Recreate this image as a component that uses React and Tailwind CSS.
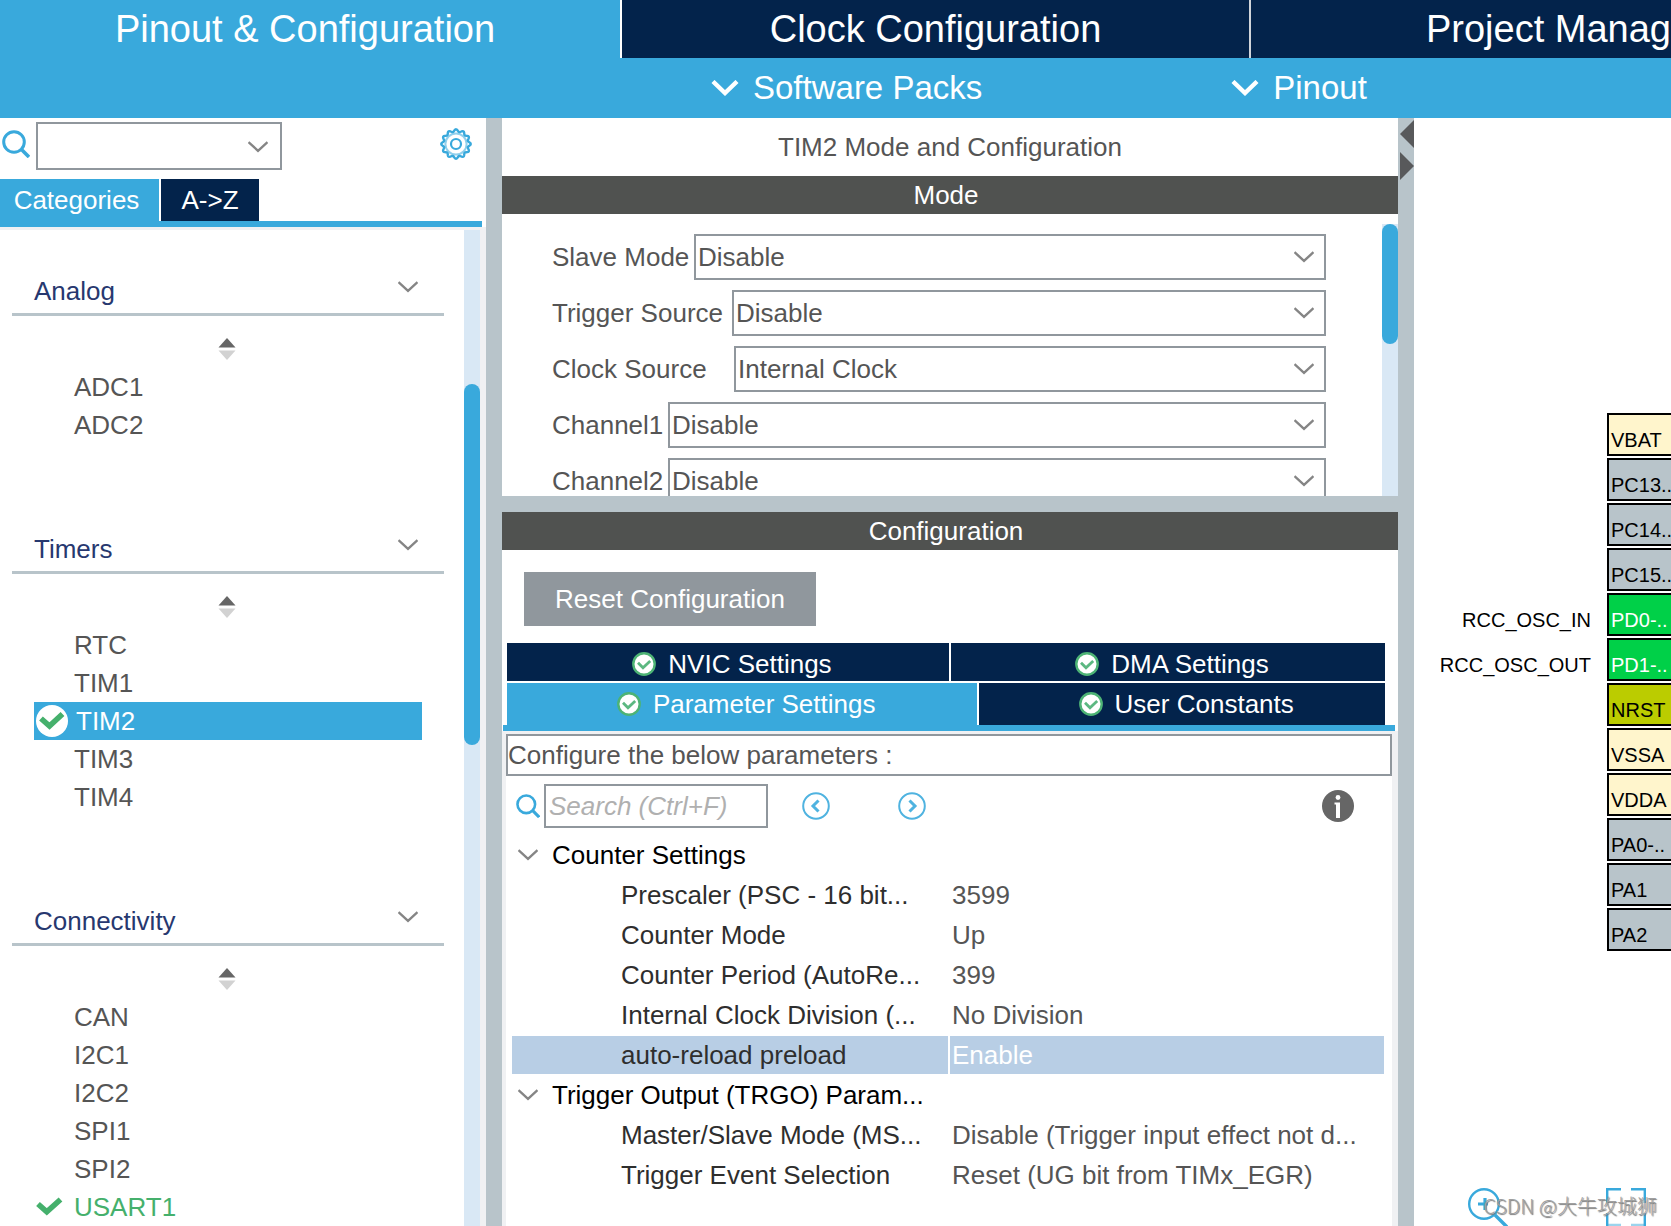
import React, { useState } from "react";
import clsx from "clsx";

const CATEGORIES = [
  { name: "Analog", items: [{ name: "ADC1" }, { name: "ADC2" }] },
  {
    name: "Timers",
    items: [
      { name: "RTC" },
      { name: "TIM1" },
      { name: "TIM2", enabled: true },
      { name: "TIM3" },
      { name: "TIM4" },
    ],
  },
  {
    name: "Connectivity",
    items: [
      { name: "CAN" },
      { name: "I2C1" },
      { name: "I2C2" },
      { name: "SPI1" },
      { name: "SPI2" },
      { name: "USART1", enabled: true },
    ],
  },
];

const MODE_FIELDS = [
  { id: "slave-mode", label: "Slave Mode", value: "Disable", labelWidth: "w-[142px]" },
  { id: "trigger-source", label: "Trigger Source", value: "Disable", labelWidth: "w-[180px]" },
  { id: "clock-source", label: "Clock Source", value: "Internal Clock", labelWidth: "w-[182px]" },
  { id: "channel1", label: "Channel1", value: "Disable", labelWidth: "w-[116px]" },
  { id: "channel2", label: "Channel2", value: "Disable", labelWidth: "w-[116px]" },
];

const PARAM_GROUPS = [
  {
    name: "Counter Settings",
    params: [
      { name: "Prescaler (PSC - 16 bit...", value: "3599" },
      { name: "Counter Mode", value: "Up" },
      { name: "Counter Period (AutoRe...", value: "399" },
      { name: "Internal Clock Division (...", value: "No Division" },
      { name: "auto-reload preload", value: "Enable" },
    ],
  },
  {
    name: "Trigger Output (TRGO) Param...",
    params: [
      { name: "Master/Slave Mode (MS...", value: "Disable (Trigger input effect not d..." },
      { name: "Trigger Event Selection", value: "Reset (UG bit from TIMx_EGR)" },
    ],
  },
];

const PIN_COLORS = {
  power: "bg-[#fff5cc] text-black",
  free: "bg-[#b8c4ca] text-black",
  used: "bg-[#00d048] text-white",
  reset: "bg-[#bbcc00] text-black",
};

const PINS = [
  { name: "VBAT", kind: "power" },
  { name: "PC13..", kind: "free" },
  { name: "PC14..", kind: "free" },
  { name: "PC15..", kind: "free" },
  { name: "PD0-..", kind: "used", signal: "RCC_OSC_IN" },
  { name: "PD1-..", kind: "used", signal: "RCC_OSC_OUT" },
  { name: "NRST", kind: "reset" },
  { name: "VSSA", kind: "power" },
  { name: "VDDA", kind: "power" },
  { name: "PA0-..", kind: "free" },
  { name: "PA1", kind: "free" },
  { name: "PA2", kind: "free" },
];

/* Icons */

const ChevronDown = ({ className }) => (
  <svg viewBox="0 0 20 12" className={clsx("h-3 w-5 shrink-0", className)} fill="none" stroke="#858585" strokeWidth="2.4">
    <path d="M0.5 1.2L10 9.8L19.5 1.2" />
  </svg>
);

const MenuChevron = () => (
  <svg viewBox="0 0 28 16" className="h-4 w-7 shrink-0" fill="none" stroke="#fff" strokeWidth="4.4">
    <path d="M2 1.5L14 13L26 1.5" />
  </svg>
);

const SearchIcon = ({ className }) => (
  <svg viewBox="0 0 28 28" className={clsx("shrink-0", className)} fill="none" stroke="#39a9dc">
    <circle cx="12" cy="12" r="10.3" strokeWidth="3" />
    <path d="M19.5 19.5L27 27" strokeWidth="3.6" />
  </svg>
);

const gearOutline = Array.from({ length: 120 }, (_, i) => {
  const angle = (i / 120) * Math.PI * 2;
  const radius = 13.5 + 1.2 * Math.cos(angle * 12);
  const x = 16 + radius * Math.sin(angle);
  const y = 16 - radius * Math.cos(angle);
  return `${i === 0 ? "M" : "L"}${x.toFixed(2)} ${y.toFixed(2)}`;
}).join("");

const GearIcon = () => (
  <svg viewBox="0 0 32 32" className="size-8" fill="none" stroke="#39a9dc">
    <path d={`${gearOutline}Z`} strokeWidth="2.4" />
    <circle cx="16" cy="16" r="10.6" strokeWidth="2" strokeOpacity="0.55" />
    <circle cx="16" cy="16" r="5" strokeWidth="2.2" />
  </svg>
);

const SortIcon = () => (
  <svg viewBox="0 0 18 22" className="h-[22px] w-[18px]">
    <path d="M9 0L17.5 9.5H0.5Z" fill="#666" />
    <path d="M9 22L17.5 12.5H0.5Z" fill="#d2d2d2" />
  </svg>
);

const Tick = ({ circled }) => (
  <svg viewBox="0 0 32 32" className="size-8">
    {circled && <circle cx="16" cy="16" r="16" fill="#fff" />}
    <path
      d={circled ? "M5 13.5L13.5 21L26.5 9" : "M2 13L10.8 20.8L24.5 8.5"}
      fill="none"
      stroke="#45b06c"
      strokeWidth="5.6"
    />
  </svg>
);

const CheckBadge = () => (
  <svg viewBox="0 0 24 24" className="size-6 shrink-0">
    <circle cx="12" cy="12" r="10.7" fill="#fff" stroke="#4db375" strokeWidth="2.4" />
    <path d="M6 10.8L11 15.8L18.2 9" fill="none" stroke="#5cb881" strokeWidth="2.8" />
  </svg>
);

const StepIcon = ({ d }) => (
  <svg viewBox="0 0 28 28" className="size-7" fill="none" stroke="#4fb3e0">
    <circle cx="14" cy="14" r="12.8" strokeWidth="2" />
    <path d={d} strokeWidth="3" />
  </svg>
);

const InfoIcon = () => (
  <svg viewBox="0 0 32 32" className="size-8">
    <circle cx="16" cy="16" r="16" fill="#666" />
    <circle cx="16" cy="7.5" r="2.4" fill="#fff" />
    <path d="M12.5 12.5H18V28H14V14.5H12.5Z" fill="#fff" />
  </svg>
);

const ZoomInIcon = () => (
  <svg viewBox="0 0 40 38" className="h-[38px] w-10" fill="none" stroke="#39a9dc">
    <circle cx="16" cy="16" r="14.8" strokeWidth="2.4" />
    <path d="M27 27L39 39" strokeWidth="3.4" />
    <path d="M10 16H20M17 10V22" strokeWidth="3.2" />
  </svg>
);

const FitIcon = () => (
  <svg viewBox="0 0 40 38" className="h-[38px] w-10" fill="none" stroke="#39a9dc" strokeWidth="2.4">
    <path d="M15 1.2H1.2V15M25 1.2H38.8V15M1.2 25V38M38.8 25V38" />
    <path d="M2 37H15M25 37H38" strokeOpacity="0.5" />
  </svg>
);

/* Left panel */

const CategorySection = ({ category, selected, onSelect }) => (
  <section className="mb-11">
    <h2 className="ml-3 flex h-[86px] items-end justify-between border-b-[3px] border-[#b8c4ca] pr-[26px] pb-1.5 pl-[22px] text-[#27386f]">
      {category.name}
      <ChevronDown className="mb-3.5" />
    </h2>
    <div className="flex h-[52px] items-center justify-center pt-3.5 pl-2.5">
      <SortIcon />
    </div>
    <ul className="mr-[22px] ml-[34px]">
      {category.items.map((item) => {
        const active = item.name === selected;
        return (
          <li key={item.name}>
            <button
              onClick={() => onSelect(item.name)}
              className={clsx(
                "flex h-[38px] w-full items-center pl-0.5",
                active ? "gap-2 bg-[#39a9dc] text-white" : "gap-1.5",
                item.enabled && !active && "text-[#45b06c]"
              )}
            >
              <span className="size-8 shrink-0">{item.enabled && <Tick circled={active} />}</span>
              {item.name}
            </button>
          </li>
        );
      })}
    </ul>
  </section>
);

const Sidebar = () => {
  const [selected, setSelected] = useState("TIM2");

  return (
    <aside className="flex w-[486px] shrink-0 flex-col bg-white">
      <div className="flex h-[61px] shrink-0 items-start pt-1">
        <SearchIcon className="mt-2 ml-0.5 size-7" />
        <div className="relative ml-1.5">
          <select aria-label="Search peripheral" className="h-12 w-[246px] appearance-none border-2 border-[#90979d] pl-px">
            <option value=""></option>
          </select>
          <ChevronDown className="pointer-events-none absolute top-[19px] right-3.5" />
        </div>
        <button aria-label="Settings" className="mt-1.5 mr-3.5 ml-auto">
          <GearIcon />
        </button>
      </div>

      <div className="mr-1 flex shrink-0 gap-0.5 border-b-[6px] border-[#39a9dc] text-white">
        <button className="h-[42px] w-[159px] bg-[#39a9dc] pr-1.5">Categories</button>
        <button className="h-[42px] w-[98px] bg-[#03234b]">A-&gt;Z</button>
      </div>

      <div className="flex min-h-0 flex-1 border-t-[3px] border-r-[6px] border-[#f0f1f3]">
        <div className="min-w-0 flex-1 overflow-hidden pr-5">
          {CATEGORIES.map((category) => (
            <CategorySection key={category.name} category={category} selected={selected} onSelect={setSelected} />
          ))}
        </div>
        <div className="w-4 bg-[#d9e8f5] pt-[154px]">
          <div className="h-[361px] rounded-full bg-[#39a9dc]" />
        </div>
      </div>
    </aside>
  );
};

/* Middle panel */

const BarTitle = ({ children }) => (
  <h2 className="flex h-[38px] shrink-0 items-center justify-center bg-[#505250] pr-2 text-white">{children}</h2>
);

const ModeField = ({ field }) => (
  <div className="flex h-[46px] shrink-0 items-center">
    <label htmlFor={field.id} className={clsx("shrink-0 whitespace-nowrap", field.labelWidth)}>
      {field.label}
    </label>
    <div className="relative flex-1">
      <select id={field.id} className="h-[46px] w-full appearance-none border-2 border-[#90979d] pl-0.5">
        <option>{field.value}</option>
      </select>
      <ChevronDown className="pointer-events-none absolute top-[17px] right-3" />
    </div>
  </div>
);

const SettingsTab = ({ label, className }) => (
  <button className={clsx("flex items-center justify-center gap-3 pl-2 text-white", className)}>
    <CheckBadge />
    {label}
  </button>
);

const ParameterTable = () => {
  const [selected, setSelected] = useState("auto-reload preload");

  return (
    <table className="ml-1.5 w-[calc(100%-14px)] table-fixed border-separate border-spacing-x-0 border-spacing-y-0.5 text-left">
      <colgroup>
        <col className="w-[438px]" />
        <col />
      </colgroup>
      {PARAM_GROUPS.map((group) => (
        <tbody key={group.name}>
          <tr className="h-[38px] text-black">
            <th colSpan={2} className="p-0 font-normal">
              <div className="flex items-center gap-3.5 pl-1.5">
                <ChevronDown />
                {group.name}
              </div>
            </th>
          </tr>
          {group.params.map((param) => {
            const active = param.name === selected;
            return (
              <tr
                key={param.name}
                onClick={() => setSelected(param.name)}
                className={clsx("h-[38px] whitespace-nowrap", active && "bg-[#b8cee5]")}
              >
                <td className={clsx("py-0 pr-0 pl-[109px] text-[#2e2e2e]", active && "border-r-2 border-white")}>
                  {param.name}
                </td>
                <td className={clsx("py-0 pr-0 pl-0.5", active && "text-white")}>{param.value}</td>
              </tr>
            );
          })}
        </tbody>
      ))}
    </table>
  );
};

const ConfigurationPanel = () => (
  <main className="flex min-w-0 flex-1 flex-col bg-white">
    <h1 className="flex h-[58px] shrink-0 items-center justify-center">TIM2 Mode and Configuration</h1>

    <BarTitle>Mode</BarTitle>
    <div className="flex h-[282px] shrink-0 overflow-hidden pt-2.5">
      <form className="mr-14 ml-[50px] flex flex-1 flex-col gap-2.5 pt-2.5">
        {MODE_FIELDS.map((field) => (
          <ModeField key={field.id} field={field} />
        ))}
      </form>
      <div className="w-4 bg-[#d9e8f5]">
        <div className="h-[120px] rounded-full bg-[#39a9dc]" />
      </div>
    </div>

    <div className="h-4 shrink-0 bg-[#b8c4ca]" />

    <BarTitle>Configuration</BarTitle>
    <div className="shrink-0 px-[22px] pt-[22px] pb-[17px]">
      <button className="h-[54px] w-[292px] bg-[#90979d] text-white">Reset Configuration</button>
    </div>

    <div className="ml-px mr-[3px] flex shrink-0 flex-col gap-0.5 border-b-[6px] border-[#39a9dc] pr-2.5 pl-1">
      <div className="flex gap-0.5">
        <SettingsTab label="NVIC Settings" className="h-[38px] flex-[442] bg-[#03234b] pt-1" />
        <SettingsTab label="DMA Settings" className="h-[38px] flex-[434] bg-[#03234b] pt-1" />
      </div>
      <div className="flex gap-0.5">
        <SettingsTab label="Parameter Settings" className="h-[42px] flex-[471] bg-[#39a9dc]" />
        <SettingsTab label="User Constants" className="h-[42px] flex-[405] bg-[#03234b]" />
      </div>
    </div>

    <div className="min-h-0 flex-1 overflow-hidden border-t-[3px] border-r-[6px] border-l-4 border-[#f0f1f3]">
      <p className="flex h-[42px] items-center border-2 border-[#90979d]">Configure the below parameters :</p>
      <div className="mt-2 mb-1.5 flex h-11 items-center">
        <SearchIcon className="mr-1 ml-2.5 size-6" />
        <input
          aria-label="Search parameters"
          placeholder="Search (Ctrl+F)"
          className="h-11 w-[224px] border-2 border-[#90979d] pl-[3px] italic placeholder:text-[#b0b0b0]"
        />
        <button aria-label="Previous" className="ml-[34px]">
          <StepIcon d="M16.5 8.5L11 14L16.5 19.5" />
        </button>
        <button aria-label="Next" className="ml-[68px]">
          <StepIcon d="M11.5 8.5L17 14L11.5 19.5" />
        </button>
        <button aria-label="Information" className="mr-[38px] ml-auto">
          <InfoIcon />
        </button>
      </div>
      <ParameterTable />
    </div>
  </main>
);

/* Right panel */

const PinoutView = () => (
  <section className="flex w-[257px] shrink-0 flex-col justify-between bg-white pt-[295px]">
    <ul className="flex flex-col gap-0.5 text-xl leading-7">
      {PINS.map((pin) => (
        <li key={pin.name} className="flex items-end justify-end gap-4">
          {pin.signal && <span className="pb-0.5 text-black">{pin.signal}</span>}
          <span
            className={clsx(
              "flex h-[43px] w-16 items-end border-2 border-r-0 border-black pl-0.5 whitespace-nowrap",
              PIN_COLORS[pin.kind]
            )}
          >
            {pin.name}
          </span>
        </li>
      ))}
    </ul>
    <div className="relative flex justify-between pr-[25px] pl-[54px]">
      <button aria-label="Zoom in">
        <ZoomInIcon />
      </button>
      <button aria-label="Fit to window">
        <FitIcon />
      </button>
      <span className="absolute right-3.5 bottom-1.5 font-['Noto_Sans_CJK_SC',sans-serif] text-xl leading-7 font-light whitespace-nowrap text-[#a0a0a0] [text-shadow:1px_1px_1px_#777]">
        CSDN @大牛攻城狮
      </span>
    </div>
  </section>
);

const Header = () => (
  <header className="shrink-0 bg-[#39a9dc] text-white">
    <nav className="flex h-[58px] gap-0.5 text-[38px] leading-[46px] whitespace-nowrap">
      <button className="flex-[620]">
        <span className="mr-2.5">Pinout &amp; Configuration</span>
      </button>
      <button className="flex-[627] bg-[#03234b] shadow-[-2px_0_0_#fff]">Clock Configuration</button>
      <button className="flex-[420] bg-[#03234b] text-right shadow-[-2px_0_0_#d0d4da]">Project Manag</button>
    </nav>
    <div className="flex h-[60px] items-center gap-[249px] pl-[711px] text-[33px] leading-10">
      <button className="flex items-center gap-3.5 whitespace-nowrap">
        <MenuChevron />
        Software Packs
      </button>
      <button className="flex items-center gap-3.5 whitespace-nowrap">
        <MenuChevron />
        Pinout
      </button>
    </div>
  </header>
);

const App = () => (
  <div className="flex h-screen flex-col overflow-hidden bg-white font-['Liberation_Sans',Arial,sans-serif] text-[26px] leading-8 text-[#555]">
    <Header />
    <div className="flex min-h-0 flex-1">
      <Sidebar />
      <div className="w-4 shrink-0 bg-[#b8c4ca]" />
      <ConfigurationPanel />
      <div className="flex w-4 shrink-0 flex-col items-end gap-1 bg-[#b8c4ca] pt-0.5">
        <button aria-label="Collapse left">
          <svg viewBox="0 0 14 28" className="h-7 w-3.5">
            <path d="M14 0V28L0 14Z" fill="#58595b" />
          </svg>
        </button>
        <button aria-label="Collapse right">
          <svg viewBox="0 0 14 28" className="h-7 w-3.5">
            <path d="M0 0V28L14 14Z" fill="#58595b" />
          </svg>
        </button>
      </div>
      <PinoutView />
    </div>
  </div>
);

export default App;
